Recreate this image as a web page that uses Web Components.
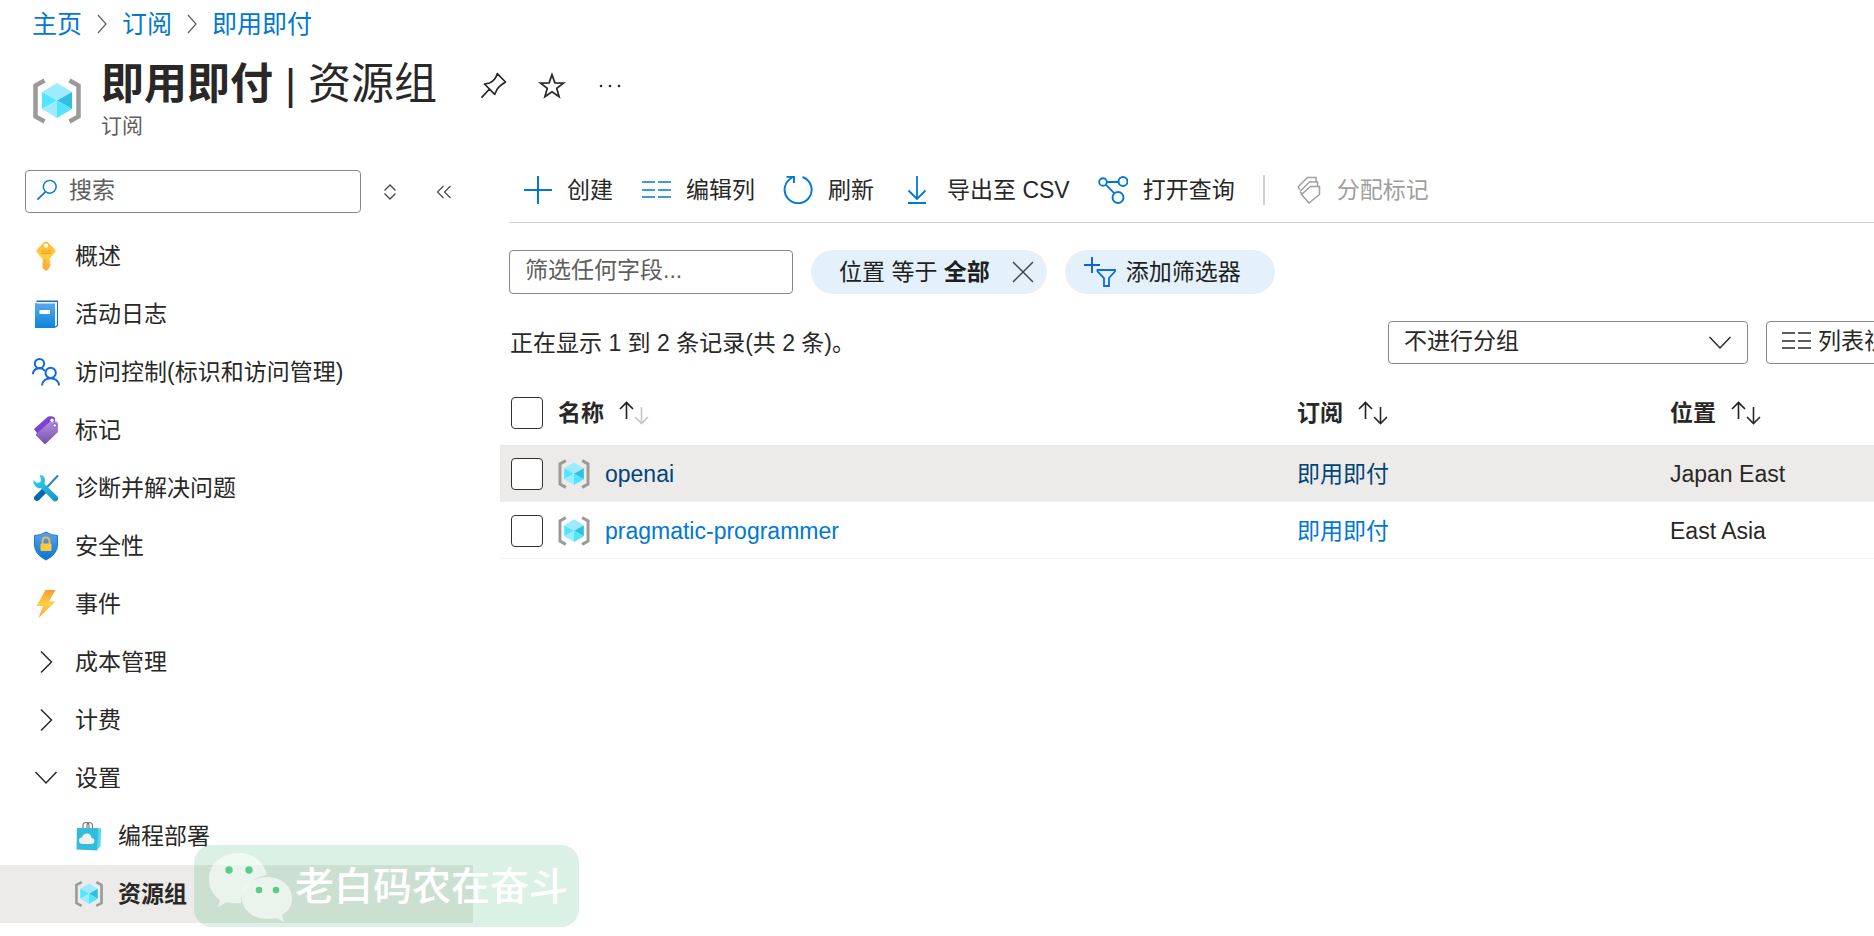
<!DOCTYPE html>
<html lang="zh-CN">
<head>
<meta charset="utf-8">
<meta name="viewport" content="width=device-width, initial-scale=1">
<title>即用即付 | 资源组</title>
<style>
  body {
    margin: 0;
    min-height: 100vh;
    overflow-x: hidden;
    background: #fff;
    color: #292827;
    font: 23px/32px "Liberation Sans", "Noto Sans CJK SC", sans-serif;
    --link: #0078d4;
    --hover: #edebe9;
    --line: #d2d0ce;
    --field: #8a8886;
  }
</style>
</head>
<body>
<portal-page></portal-page>

<script>
const ICONS = {
  group: ['0 0 48 46', `<path d="M11.500 2.500 2.500 7.500v31l9 5" fill="none" stroke="#9b9a98" stroke-width="4.500"/><path d="M36.500 2.500 45.500 7.500v31l-9 5" fill="none" stroke="#9b9a98" stroke-width="4.500"/>
    <path d="M24 5 39 14 24 22.500 9 14z" fill="#9cebff"/><path d="M9 14 24 22.500 9 31z" fill="#50e6ff"/><path d="M9 31 24 22.500V40z" fill="#9cebff"/><path d="M39 14 24 22.500 39 31z" fill="#32bedd"/><path d="M39 31 24 22.500V40z" fill="#50e6ff"/>`],
  pin: ['0 0 28 28', `<path d="M1.500 25.700 9.500 17M4.500 12 14.700 22.300 17 17.500Q19 14 25.500 10L17.300 1.700Q15.500 8 9.500 11z" fill="none" stroke="#292827" stroke-width="1.700" stroke-linejoin="round"/>`],
  star: ['0 0 26 26', `<path d="m13 2.500 2.700 7.600 8 .2-6.300 4.900 2.200 7.800-6.600-4.600L6.400 23l2.200-7.800-6.300-4.900 8-.2z" fill="none" stroke="#292827" stroke-width="1.600"/>`],
  more: ['0 0 22 6', `<g fill="#292827"><circle cx="2" cy="3" r="1.300"/><circle cx="11" cy="3" r="1.300"/><circle cx="20" cy="3" r="1.300"/></g>`],
  sep: ['0 0 12 20', `<path d="m2 1 8 9-8 9" fill="none" stroke="#605e5c" stroke-width="1.200"/>`],
  search: ['0 0 24 24', `<circle cx="15" cy="8.500" r="7" fill="none" stroke="#0078d4" stroke-width="1.600"/><path d="M10.300 14 1.500 22.500" stroke="#0078d4" stroke-width="1.800"/>`],
  sorter: ['0 0 14 16', `<path d="M1.500 6.500 7 1l5.500 5.500M1.500 9.500 7 15l5.500-5.500" fill="none" stroke="#484644" stroke-width="1.300"/>`],
  collapse: ['0 0 16 14', `<path d="M7.500 1 1.500 7l6 6M14.500 1 8.500 7l6 6" fill="none" stroke="#484644" stroke-width="1.200"/>`],
  key: ['0 0 28 30', `<defs><linearGradient id="k" x1="0" y1="0" x2="0" y2="1"><stop stop-color="#feb52b"/><stop offset=".5" stop-color="#ffd046"/><stop offset="1" stop-color="#f9a738"/></linearGradient></defs><path d="M12.300 1.200q1.700-1.500 3.400 0l7.300 7.300q1 1.500 0 3L17.500 18v1.500l1.300 1.200-1.300 1.700 1.300 1.600-1.300 1.800v1l-2.300 2.500q-1.200.8-2.400 0l-2.300-2.500V18L5 11.500q-1-1.500 0-3z" fill="url(#k)"/><circle cx="14" cy="4.600" r="2.200" fill="#fff"/><path d="M9 10h10M9 12.300h10" stroke="#f59d1e" stroke-width="1.200"/><path d="M12.800 18v9" stroke="#f2a52b"/>`],
  book: ['0 0 28 30', `<defs><linearGradient id="b" x1="0" y1="0" x2="0" y2="1"><stop stop-color="#5ea8ef"/><stop offset="1" stop-color="#0a86d8"/></linearGradient></defs><path d="M4.500 1.500h21.500v25l-2 2H4.500z" fill="#1f6eae"/><path d="M4.500 3H25v23l-2.500 2H4z" fill="#f3f8fc"/><path d="M3 3.500 4.500 4.500H23V29H3z" fill="url(#b)"/><path d="M7.500 11h10.500v4H7.500z" fill="#fff"/>`],
  people: ['0 0 30 30', `<g fill="none" stroke="#0f6ae0" stroke-width="2.100"><circle cx="8" cy="6" r="5"/><path d="M1 17.500c0-7 9-8.500 13-3.700"/><circle cx="20" cy="16" r="5.500"/><path d="M10.700 29.500c.5-10.500 17.800-10.500 18.300 0"/></g>`],
  tag: ['0 0 28 30', `<defs><linearGradient id="t" x1="0" y1="0" x2="0" y2="1"><stop stop-color="#b58ee0"/><stop offset="1" stop-color="#7650ae"/></linearGradient></defs><path d="M2 14 15.500 2q1-.8 2.500-.8l3 .3q2 .5 2 2.500v4L6 19.500z" fill="#7a43d0"/><path d="M4 19 17.500 7.200q1-.7 2-.7h4.500q2 0 2 2.300V16q0 1-.7 1.800L14 28.500q-1 1-2 0L4 20.500z" fill="url(#t)"/><circle cx="20" cy="5.200" r="1.800" fill="#fff"/><circle cx="22.700" cy="10.500" r="1.800" fill="#fff" stroke="#7b45cf"/>`],
  tools: ['0 0 28 30', `<defs><linearGradient id="w" x1="0" y1="0" x2="1" y2="1"><stop stop-color="#35d3f2"/><stop offset="1" stop-color="#1490c7"/></linearGradient></defs><path d="M26 2.500 10 19.500" stroke="#2589bd" stroke-width="2"/><path d="M11.500 18.500 5 25" stroke="#0669ad" stroke-width="6" stroke-linecap="round"/><path d="M7.500 2q5.500 0 5.500 5.500l-.5 3.500L26 24q1 3.500-2.500 4.500l-2-.5L9 15q-5.500 1-7.500-5V7l3.500 3 3.500-1 .5-3z" fill="url(#w)"/>`],
  shield: ['0 0 28 30', `<defs><linearGradient id="s" x1="0" y1="0" x2="0" y2="1"><stop stop-color="#5ea0ef"/><stop offset="1" stop-color="#0178d4"/></linearGradient></defs><path d="M14 1q5 3.500 11.500 3.500V14q0 9-11.500 15Q2.500 23 2.500 14V4.500Q9 4.500 14 1z" fill="url(#s)" stroke="#137bd3"/><path d="M10.500 13v-3q0-3.500 3.500-3.500t3.500 3.500v3" fill="none" stroke="#f9b73f" stroke-width="2"/><rect x="8.500" y="12.500" width="11" height="7.500" rx="1" fill="#ffc93b"/>`],
  bolt: ['0 0 28 30', `<defs><linearGradient id="z" x1="0" y1="0" x2="0" y2="1"><stop stop-color="#f99b35"/><stop offset=".5" stop-color="#ffd044"/><stop offset="1" stop-color="#fa9d36"/></linearGradient></defs><path d="M13.500 1h10L17 12.500h6.500L6.500 29 11 17H4.500z" fill="url(#z)"/>`],
  right: ['0 0 28 30', `<path d="M9 4.500 19.500 15 9 25.500" fill="none" stroke="#292827" stroke-width="1.500"/>`],
  down: ['0 0 28 30', `<path d="M3.500 9 14 20 24.500 9" fill="none" stroke="#292827" stroke-width="1.500"/>`],
  bag: ['0 0 28 30', `<path d="M8 8V4q0-2.500 3-2.500T14 4v4M12 8V4q0-2.500 2.500-2.500T17.500 4v4" fill="none" stroke="#7a7a7a" stroke-width="1.200"/><path d="M20 7l6 .5-.5 17.500L22 29z" fill="#50d6f0"/><path d="M2 7h21l-1 22.500L1.500 28.500z" fill="#30bcdb"/><path d="M8 23q-4 0-4-3.500 0-3 3-3 1-4 5-4t4.500 4.500q3 .5 3 3T17 23z" fill="#f0f1f3"/>`],
  plus: ['0 0 28 28', `<path d="M14 0v28M0 14h28" stroke="#0078d4" stroke-width="2"/>`],
  columns: ['0 0 30 28', `<path d="M1 6h13M17 6h13M1 14h13M17 14h13M1 21h13M17 21h13" stroke="currentColor" stroke-width="1.600"/>`],
  refresh: ['0 0 30 28', `<path d="M19.500 1A13.500 13.500 0 1 1 9.500 1.500M3.500.800h7.500V7" fill="none" stroke="#0078d4" stroke-width="1.900"/>`],
  export: ['0 0 20 28', `<path d="M10 0v22M1.500 14.500 10 23l8.500-8.500M1 27h18" fill="none" stroke="#0078d4" stroke-width="1.800"/>`],
  query: ['0 0 30 28', `<g fill="none" stroke="#0078d4" stroke-width="1.900"><circle cx="5" cy="6" r="3.800"/><circle cx="25" cy="5.500" r="4.500"/><circle cx="20" cy="21.500" r="5.500"/><path d="M9 6h11.500M7.800 8.700l8.400 8.500"/></g>`],
  tags: ['0 0 24 28', `<path d="M1 11 10.500 1.500H19v5M1 11l2 2.500M3 15.500 12.500 6H20.500v5M3 15.500l2 2.500M4.500 18.500 13.500 10.500H22.500v8L12 27z" fill="none" stroke="#a19f9d" stroke-width="1.500"/>`],
  close: ['0 0 24 24', `<path d="m2 2 20 20M22 2 2 22" stroke="#484644" stroke-width="1.500"/>`],
  filter: ['0 0 32 30', `<path d="M8 0v16M0 8h16" stroke="#0f5fd6" stroke-width="1.900"/><path d="M13.500 13h17.500v1.500L25 21v8h-5v-8l-6.500-6.500z" fill="none" stroke="#0f6ae0" stroke-width="1.800"/>`],
  sort: ['0 0 30 24', `<path d="M7.500 18V1.500M1 8 7.500 1.500 14 8" fill="none" stroke="#201f1e" stroke-width="1.600"/><path d="M22.500 6v16.500M16 16l6.500 6.500L29 16" fill="none" stroke="currentColor" stroke-width="1.600"/>`],
  wechat: ['0 0 84 78', `<path d="M30 0C13 0 0 11 0 26c0 9 4 16 11 21l-2 7 9-5q7 2 14 1C32 36 43 24 58 22 55 9 44 0 30 0z" fill="#fff" fill-opacity=".6"/><path d="M58 24c-14 0-25 9-25 21s11 21 25 21q5 0 9-1l8 4-2-7c7-4 10-10 10-17 0-12-11-21-25-21z" fill="#fff" fill-opacity=".6"/><g fill="#57cd8d"><circle cx="20" cy="17" r="3.700"/><circle cx="40" cy="17" r="3.700"/><circle cx="50" cy="37" r="3.300"/><circle cx="67" cy="37" r="3.300"/></g>`]
};

const define = (name, html) => {
  const template = document.createElement('template');
  template.innerHTML = html;
  customElements.define(name, class extends HTMLElement {
    constructor() {
      super();
      this.attachShadow({ mode: 'open' }).append(template.content.cloneNode(true));
    }
  });
};

customElements.define('ui-icon', class extends HTMLElement {
  connectedCallback() {
    if (this.shadowRoot) return;
    const [box, art] = ICONS[this.getAttribute('name')];
    this.attachShadow({ mode: 'open' }).innerHTML = `
      <style>:host{display:block;flex:none;width:28px;height:30px}svg{display:block;width:100%;height:100%}</style>
      <svg viewBox="${box}" aria-hidden="true">${art}</svg>`;
  }
});

define('page-header', `
  <style>
    :host { display: block; padding: 8px 32px 0; }
    nav { display: flex; align-items: center; gap: 14px; font-size: 25px; height: 32px; }
    nav ui-icon { width: 12px; height: 20px; }
    a { color: var(--link); text-decoration: none; }
    .head { display: flex; align-items: flex-start; margin-top: 18px; gap: 20px; }
    .head > ui-icon { width: 48px; height: 46px; margin: 20px 0 0 1px; }
    h1 { margin: 0; font-size: 43px; line-height: 52px; font-weight: 400; white-space: nowrap; }
    p { margin: 2px 0 0; font-size: 21px; line-height: 28px; color: #605e5c; }
    .title { display: flex; align-items: center; }
    .actions { display: flex; align-items: center; margin: 4px 0 0 43px; gap: 30px; }
    button { display: grid; place-items: center; border: 0; padding: 0; background: none; width: 28px; height: 32px; }
    button ui-icon { width: 28px; height: 28px; }
    button .more { width: 22px; height: 6px; }
  </style>
  <nav aria-label="导航路径"><a href="#">主页</a><ui-icon name="sep"></ui-icon><a href="#">订阅</a><ui-icon name="sep"></ui-icon><a href="#">即用即付</a></nav>
  <div class="head">
    <ui-icon name="group"></ui-icon>
    <div>
      <div class="title">
        <h1><b>即用即付</b> | 资源组</h1>
        <div class="actions">
          <button aria-label="固定"><ui-icon name="pin"></ui-icon></button>
          <button aria-label="收藏"><ui-icon name="star"></ui-icon></button>
          <button aria-label="更多"><ui-icon class="more" name="more"></ui-icon></button>
        </div>
      </div>
      <p>订阅</p>
    </div>
  </div>`);

customElements.define('nav-item', class extends HTMLElement {
  connectedCallback() {
    if (this.shadowRoot) return;
    this.attachShadow({ mode: 'open' }).innerHTML = `
      <style>
        :host { display: block; }
        a { display: flex; align-items: center; gap: 15px; height: 58px; padding-left: 32px; color: inherit; text-decoration: none; }
        :host([sub]) a { padding-left: 75px; }
        :host([selected]) a { background: var(--hover); font-weight: 700; }
      </style>
      <a href="#"><ui-icon name="${this.getAttribute('icon')}"></ui-icon><span><slot></slot></span></a>`;
  }
});

define('side-menu', `
  <style>
    :host { display: block; flex: none; width: 473px; }
    .tools { display: flex; align-items: center; padding-left: 25px; margin-bottom: 14px; }
    label { display: flex; align-items: center; gap: 11px; box-sizing: border-box; width: 336px; height: 43px; padding: 0 10px 4px; border: 1px solid var(--field); border-radius: 4px; }
    label ui-icon { width: 22px; height: 22px; }
    input { flex: 1; min-width: 0; border: 0; padding: 0; margin: 0; outline: 0; background: none; font: inherit; color: inherit; }
    input::placeholder { color: #605e5c; opacity: 1; }
    button { border: 0; background: none; padding: 0; }
    .sorter { margin-left: 22px; } .sorter ui-icon { width: 14px; height: 16px; }
    .collapse { margin-left: 39px; } .collapse ui-icon { width: 16px; height: 14px; }
  </style>
  <div class="tools">
    <label><ui-icon name="search"></ui-icon><input type="search" placeholder="搜索" aria-label="搜索"></label>
    <button class="sorter" aria-label="展开或折叠全部"><ui-icon name="sorter"></ui-icon></button>
    <button class="collapse" aria-label="折叠菜单"><ui-icon name="collapse"></ui-icon></button>
  </div>
  <nav aria-label="资源菜单">
    <nav-item icon="key">概述</nav-item>
    <nav-item icon="book">活动日志</nav-item>
    <nav-item icon="people">访问控制(标识和访问管理)</nav-item>
    <nav-item icon="tag">标记</nav-item>
    <nav-item icon="tools">诊断并解决问题</nav-item>
    <nav-item icon="shield">安全性</nav-item>
    <nav-item icon="bolt">事件</nav-item>
    <nav-item icon="right">成本管理</nav-item>
    <nav-item icon="right">计费</nav-item>
    <nav-item icon="down">设置</nav-item>
    <nav-item icon="bag" sub>编程部署</nav-item>
    <nav-item icon="group" sub selected>资源组</nav-item>
  </nav>`);

define('command-bar', `
  <style>
    :host { display: flex; align-items: center; gap: 28px; height: 59px; padding: 0 15px 7px; box-sizing: border-box; border-bottom: 1px solid var(--line); margin-left: 9px; white-space: nowrap; }
    button { display: flex; align-items: center; gap: 15px; border: 0; padding: 0; background: none; font: inherit; color: #292827; }
    button:disabled { color: #a19f9d; }
    ui-icon { width: 30px; height: 28px; color: var(--link); }
    .plus { width: 28px; }
    .export { width: 20px; }
    .tags { width: 24px; }
    .gap { margin-left: 5px; gap: 20px; }
    i { width: 2px; height: 30px; background: #d2d0ce; }
    .last { margin-left: 4px; gap: 16px; }
  </style>
  <button><ui-icon class="plus" name="plus"></ui-icon>创建</button>
  <button><ui-icon name="columns"></ui-icon>编辑列</button>
  <button><ui-icon name="refresh"></ui-icon>刷新</button>
  <button class="gap"><ui-icon class="export" name="export"></ui-icon>导出至 CSV</button>
  <button><ui-icon name="query"></ui-icon>打开查询</button>
  <i></i>
  <button class="last" disabled><ui-icon class="tags" name="tags"></ui-icon>分配标记</button>`);

define('filter-bar', `
  <style>
    :host { display: flex; gap: 18px; margin: 27px 0 0 9px; white-space: nowrap; }
    input { box-sizing: border-box; width: 284px; height: 44px; border: 1px solid var(--field); border-radius: 4px; padding: 0 15px 4px; font: inherit; color: inherit; }
    input::placeholder { color: #605e5c; opacity: 1; }
    .pill { display: flex; align-items: center; box-sizing: border-box; height: 44px; border: 0; border-radius: 22px; background: #e5f1fa; padding: 0 12px 0 28px; font: inherit; color: #201f1e; gap: 21px; }
    .pill button { border: 0; background: none; padding: 0; }
    .pill button ui-icon { width: 24px; height: 24px; }
    .add { padding: 0 34px 0 19px; gap: 10px; }
    .add ui-icon { width: 32px; height: 30px; }
  </style>
  <input type="text" placeholder="筛选任何字段..." aria-label="筛选任何字段">
  <div class="pill"><span>位置 等于 <b>全部</b></span><button aria-label="删除筛选器"><ui-icon name="close"></ui-icon></button></div>
  <button class="pill add"><ui-icon name="filter"></ui-icon>添加筛选器</button>`);

define('list-options', `
  <style>
    :host { display: flex; align-items: center; gap: 18px; margin: 27px -60px 0 10px; white-space: nowrap; }
    p { flex: 1; margin: 0; }
    .select { display: grid; width: 360px; height: 43px; align-items: center; }
    .select > * { grid-area: 1 / 1; }
    select { appearance: none; width: 100%; height: 43px; box-sizing: border-box; border: 1px solid var(--field); border-radius: 4px; background: #fff; padding: 0 48px 4px 15px; font: inherit; color: inherit; }
    .select ui-icon { justify-self: end; margin-right: 14px; pointer-events: none; }
    button { display: flex; align-items: center; gap: 7px; box-sizing: border-box; width: 168px; height: 43px; border: 1px solid var(--field); border-radius: 4px; background: #fff; padding: 0 14px 4px; font: inherit; color: inherit; }
    button ui-icon { width: 30px; height: 28px; }
  </style>
  <p>正在显示 1 到 2 条记录(共 2 条)。</p>
  <div class="select"><select aria-label="分组依据"><option>不进行分组</option></select><ui-icon name="down"></ui-icon></div>
  <button><ui-icon name="columns"></ui-icon>列表视图</button>`);

define('resource-table', `
  <style>
    :host { display: block; margin-top: 16px; }
    table { width: 100%; border-collapse: separate; border-spacing: 0; table-layout: fixed; white-space: nowrap; }
    .check { width: 58px; } .sub { width: 373px; } .loc { width: 204px; }
    th, td { padding: 0; text-align: left; }
    th { height: 65px; }
    td { box-sizing: border-box; height: 57px; padding-top: 2px; border-bottom: 1px solid #f3f2f1; }
    th:first-child, td:first-child { padding-left: 11px; }
    .cell { display: flex; align-items: center; gap: 15px; }
    td ui-icon { width: 32px; height: 30px; }
    th ui-icon { width: 30px; height: 24px; }
    .dim { color: #c8c6c4; }
    input { display: block; appearance: none; box-sizing: border-box; width: 32px; height: 32px; margin: 0; border: 1px solid #323130; border-radius: 4px; background: #fff; }
    a { color: var(--link); text-decoration: none; }
    .hover { background: var(--hover); }
    .hover a { color: #004578; }
  </style>
  <table>
    <colgroup><col class="check"><col><col class="sub"><col class="loc"></colgroup>
    <thead><tr>
      <th><input type="checkbox" aria-label="全选"></th>
      <th><div class="cell">名称<ui-icon class="dim" name="sort"></ui-icon></div></th>
      <th><div class="cell">订阅<ui-icon name="sort"></ui-icon></div></th>
      <th><div class="cell">位置<ui-icon name="sort"></ui-icon></div></th>
    </tr></thead>
    <tbody>
      <tr class="hover"><td><input type="checkbox" aria-label="选择 openai"></td><td><div class="cell"><ui-icon name="group"></ui-icon><a href="#">openai</a></div></td><td><a href="#">即用即付</a></td><td>Japan East</td></tr>
      <tr><td><input type="checkbox" aria-label="选择 pragmatic-programmer"></td><td><div class="cell"><ui-icon name="group"></ui-icon><a href="#">pragmatic-programmer</a></div></td><td><a href="#">即用即付</a></td><td>East Asia</td></tr>
    </tbody>
  </table>`);

define('account-mark', `
  <style>
    :host { position: absolute; left: 194px; top: 845px; display: flex; align-items: center; box-sizing: border-box; height: 82px; padding: 0 11px 0 15px; gap: 2px; border-radius: 18px; background: rgba(43, 174, 103, .17); color: #fff; font-size: 39px; line-height: 48px; font-weight: 500; white-space: nowrap; pointer-events: none; }
    ui-icon { width: 84px; height: 78px; margin-top: 12px; }
    span { margin-top: 2px; }
  </style>
  <ui-icon name="wechat"></ui-icon><span><slot></slot></span>`);

define('portal-page', `
  <style>
    :host { display: block; position: relative; overflow: hidden; min-height: 100vh; }
    .body { display: flex; gap: 27px; }
    side-menu { margin-top: 30px; }
    main { flex: 1; min-width: 0; margin-top: 24px; }
  </style>
  <page-header></page-header>
  <div class="body">
    <side-menu></side-menu>
    <main>
      <command-bar></command-bar>
      <filter-bar></filter-bar>
      <list-options></list-options>
      <resource-table></resource-table>
    </main>
  </div>
  <account-mark>老白码农在奋斗</account-mark>`);
</script>
</body>
</html>
